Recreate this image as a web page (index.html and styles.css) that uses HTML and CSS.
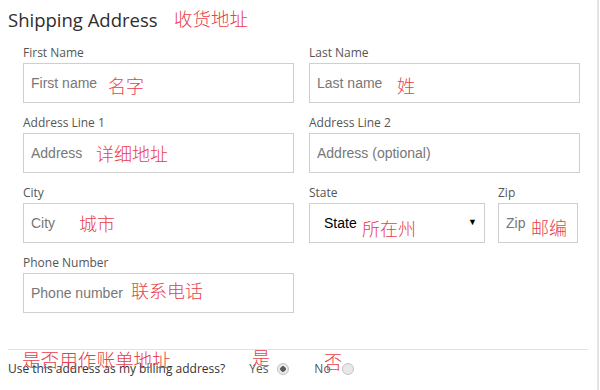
FILE: index.html
```html
<!DOCTYPE html>
<html lang="en">
<head>
    <meta charset="UTF-8">
    <meta name="viewport" content="width=device-width, initial-scale=1.0">
    <title>Shipping Address</title>
    <link rel="stylesheet" href="styles.css">
</head>
<body>
    <div class="page">
        <h2 class="title">Shipping Address <span class="note note-title">收货地址</span></h2>
        <div class="fields">
            <div class="field">
                <label>First Name</label>
                <div class="control">
                    <input type="text" placeholder="First name">
                    <span class="note note-first">名字</span>
                </div>
            </div>
            <div class="field">
                <label>Last Name</label>
                <div class="control">
                    <input type="text" placeholder="Last name">
                    <span class="note note-last">姓</span>
                </div>
            </div>
            <div class="field">
                <label>Address Line 1</label>
                <div class="control">
                    <input type="text" placeholder="Address">
                    <span class="note note-addr">详细地址</span>
                </div>
            </div>
            <div class="field">
                <label>Address Line 2</label>
                <div class="control">
                    <input type="text" placeholder="Address (optional)">
                </div>
            </div>
            <div class="field">
                <label>City</label>
                <div class="control">
                    <input type="text" placeholder="City">
                    <span class="note note-city">城市</span>
                </div>
            </div>
            <div class="state-zip">
                <div class="field">
                    <label>State</label>
                    <div class="control">
                        <select><option>State</option></select>
                        <span class="arrow">▼</span>
                        <span class="note note-state">所在州</span>
                    </div>
                </div>
                <div class="field">
                    <label>Zip</label>
                    <div class="control">
                        <input type="text" placeholder="Zip">
                        <span class="note note-zip">邮编</span>
                    </div>
                </div>
            </div>
            <div class="field">
                <label>Phone Number</label>
                <div class="control">
                    <input type="text" placeholder="Phone number">
                    <span class="note note-phone">联系电话</span>
                </div>
            </div>
        </div>
        <div class="billing">
            <span class="question">Use this address as my billing address?</span>
            <label class="opt opt-yes">Yes <input type="radio" name="billing" checked></label>
            <label class="opt opt-no">No <input type="radio" name="billing"></label>
            <span class="note note-billing">是否用作账单地址</span>
            <span class="note note-yes">是</span>
            <span class="note note-no">否</span>
        </div>
    </div>
</body>
</html>
```

FILE: styles.css
```css
body { margin: 0; background: #fff; font-family: "Open Sans", "Liberation Sans", sans-serif; color: #333; }
.page { width: 589px; height: 382px; padding: 8px 0 0 8px; border-right: 2px solid #e4e4e4; }
.title { position: relative; margin: 0; font-size: 18.5px; line-height: 24px; font-weight: normal; color: #2e2e2e; }

.note { position: absolute; font-family: "Noto Sans CJK SC", sans-serif; font-size: 18px; font-weight: 300; line-height: 18px; color: #e8404a; white-space: nowrap; pointer-events: none; }
.note-title { left: 166px; top: 1px; font-size: 18.5px; }
.note-first { left: 85px; top: 13px; }
.note-last { left: 88px; top: 13px; }
.note-addr { left: 73px; top: 11px; }
.note-city { left: 56px; top: 11px; }
.note-state { left: 53px; top: 16px; }
.note-zip { left: 33px; top: 15px; }
.note-phone { left: 108px; top: 8px; }
.note-billing { left: 14px; top: 0; font-size: 18.6px; }
.note-yes { left: 244px; top: -2px; }
.note-no { left: 316px; top: 2px; }

.fields { display: grid; grid-template-columns: 271px 271px; column-gap: 15px; row-gap: 11px; margin: 12px 0 0 15px; }
.state-zip { display: grid; grid-template-columns: 176px 80px; column-gap: 13px; }
.field label { display: block; padding-top: 1px; font-size: 12px; line-height: 16px; color: #555; margin-bottom: 2px; }
.control { position: relative; }
.control input, .control select { box-sizing: border-box; display: block; width: 100%; height: 40px; margin: 0; padding: 0 7px; border: 1px solid #cfcfcf; border-radius: 0; background: #fff; font-family: "Liberation Sans", Arial, sans-serif; font-size: 14px; color: #000; outline: none; }
.control input::placeholder { color: #777; }
.control select { appearance: none; -webkit-appearance: none; padding-left: 14px; }
.arrow { position: absolute; right: 8px; top: 14px; font-size: 9px; line-height: 10px; color: #000; }

.billing { position: relative; display: flex; align-items: center; width: 580px; margin-top: 36px; padding-top: 9px; border-top: 1px solid #e2e2e2; font-size: 12px; line-height: 20px; color: #333; }
.opt { display: flex; align-items: center; color: #555; }
.opt-yes { margin-left: 24px; }
.opt-no { margin-left: 25px; }
.opt input { appearance: none; -webkit-appearance: none; box-sizing: border-box; width: 12px; height: 12px; margin: 0 0 0 9px; border: 1px solid #c4c4c4; border-radius: 50%; background: #e8e8e8; }
.opt-no input { margin-left: 11px; }
.opt input:checked { background: radial-gradient(circle, #5a5a5a 0 2.5px, #e8e8e8 3px); }
```
